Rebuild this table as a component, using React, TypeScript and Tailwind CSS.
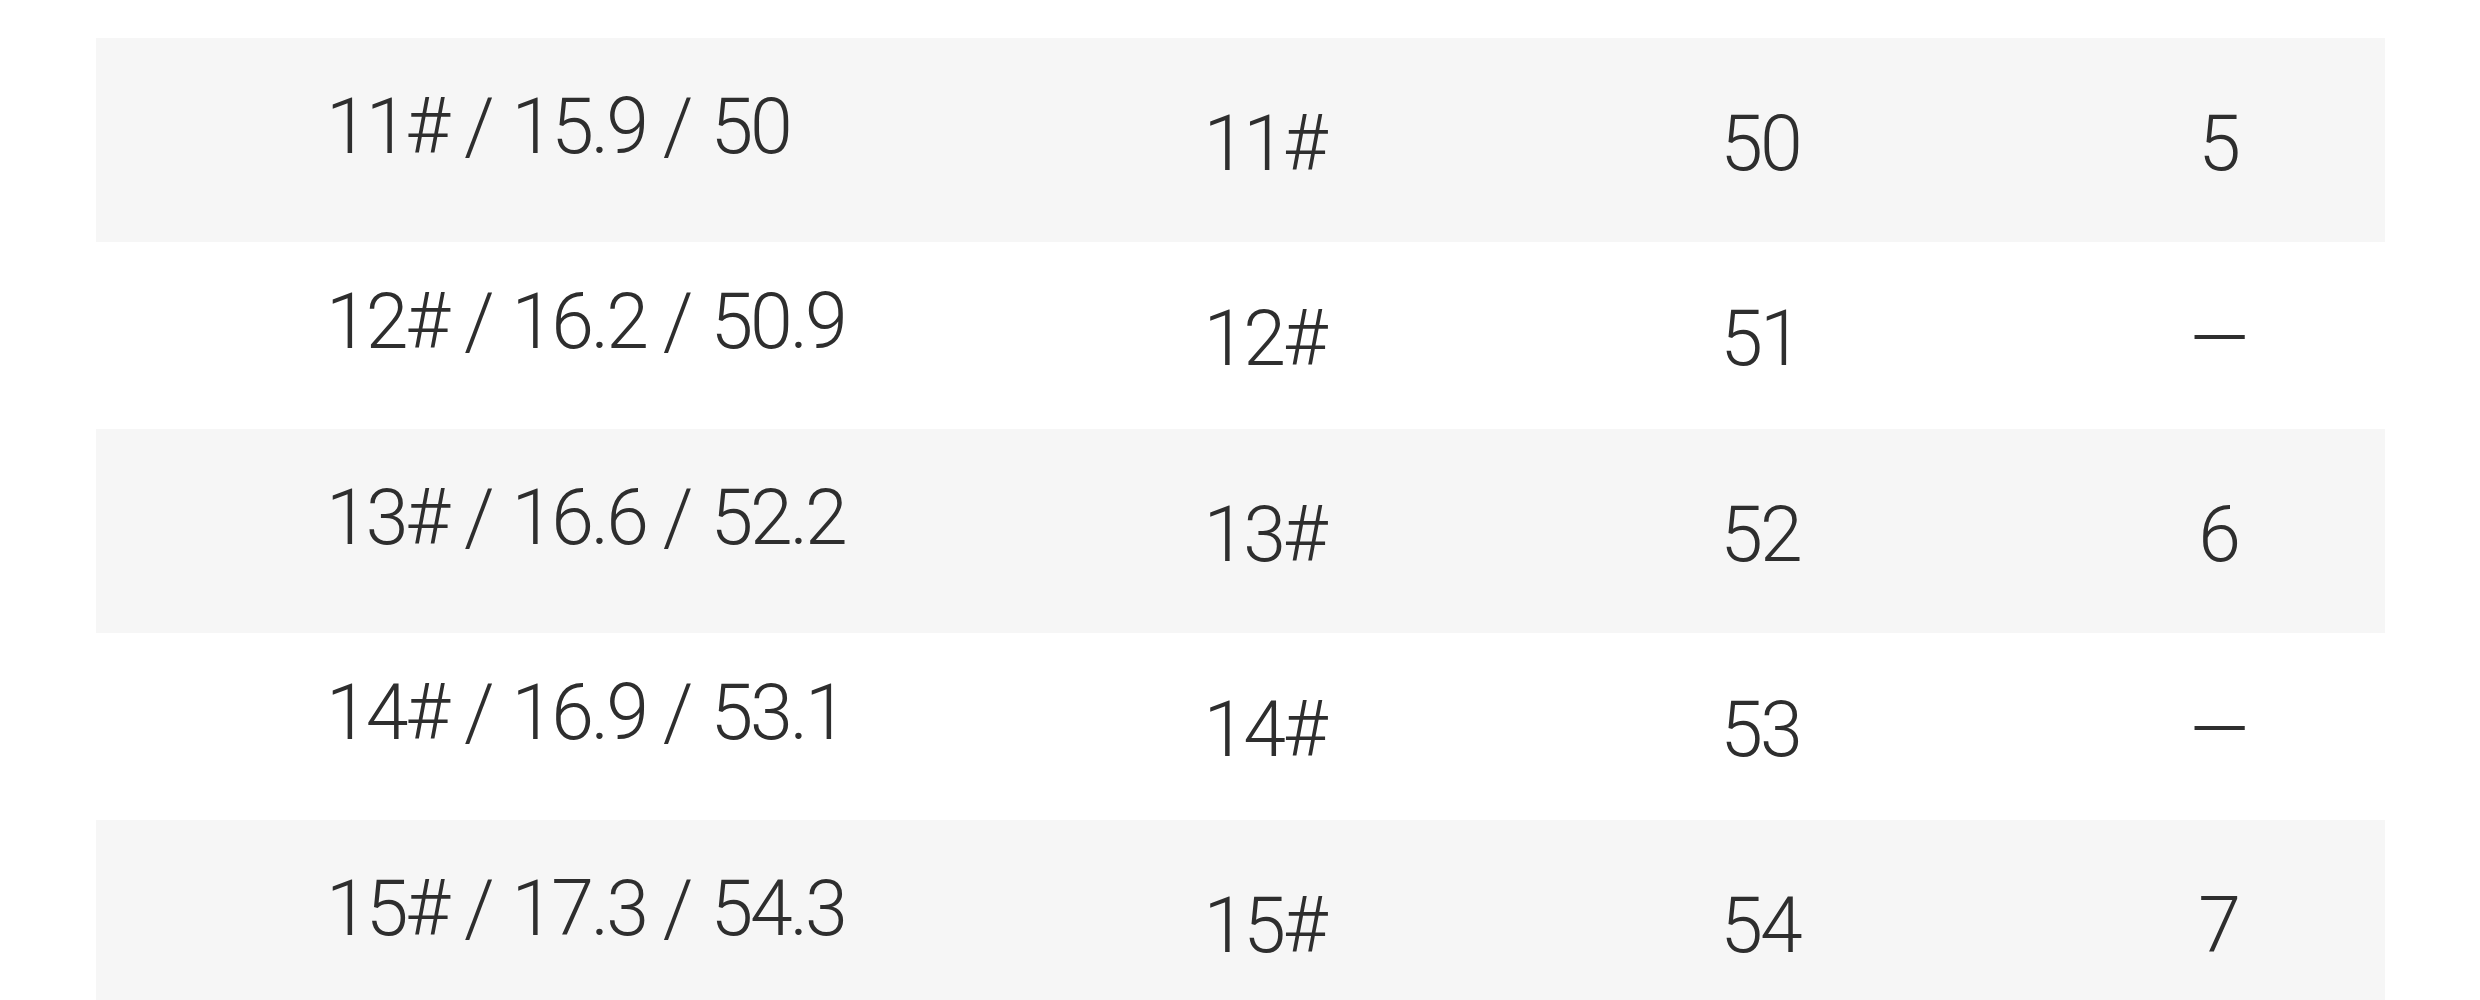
const ROWS = [
  { spec: ['11#', '15.9', '50'], size: '11#', len: '50', extra: '5' },
  { spec: ['12#', '16.2', '50.9'], size: '12#', len: '51', extra: '—' },
  { spec: ['13#', '16.6', '52.2'], size: '13#', len: '52', extra: '6' },
  { spec: ['14#', '16.9', '53.1'], size: '14#', len: '53', extra: '—' },
  { spec: ['15#', '17.3', '54.3'], size: '15#', len: '54', extra: '7' },
];

export default function App() {
  return (
    <div
      className="w-[2480px] h-[1000px] overflow-hidden bg-white pt-[38px] pl-[96px] text-[#2e2e2e]"
      style={{ fontFamily: 'Roboto, "Noto Sans", "Liberation Sans", sans-serif' }}
    >
      <div className="w-[2289px] flex flex-col">
        {ROWS.map((r, i) => (
          <div
            key={r.size}
            className={
              'grid grid-cols-[963px_410px_582px_334px] items-center text-[77px] font-light tracking-[-0.04em] leading-none ' +
              (i % 2 === 0 ? 'h-[204px] bg-[#f6f6f6]' : 'h-[187px] bg-white')
            }
          >
            <div className="pl-[230px] pb-[26px] whitespace-nowrap">
              {r.spec.map((part, j) => (
                <span key={j}>
                  {j > 0 && <span className="px-[17px] tracking-normal">/</span>}
                  {part}
                </span>
              ))}
            </div>
            <div className="pt-[8px] text-center">{r.size}</div>
            <div className="pt-[8px] text-center">{r.len}</div>
            <div className="pt-[8px] text-center">{r.extra}</div>
          </div>
        ))}
      </div>
    </div>
  );
}
